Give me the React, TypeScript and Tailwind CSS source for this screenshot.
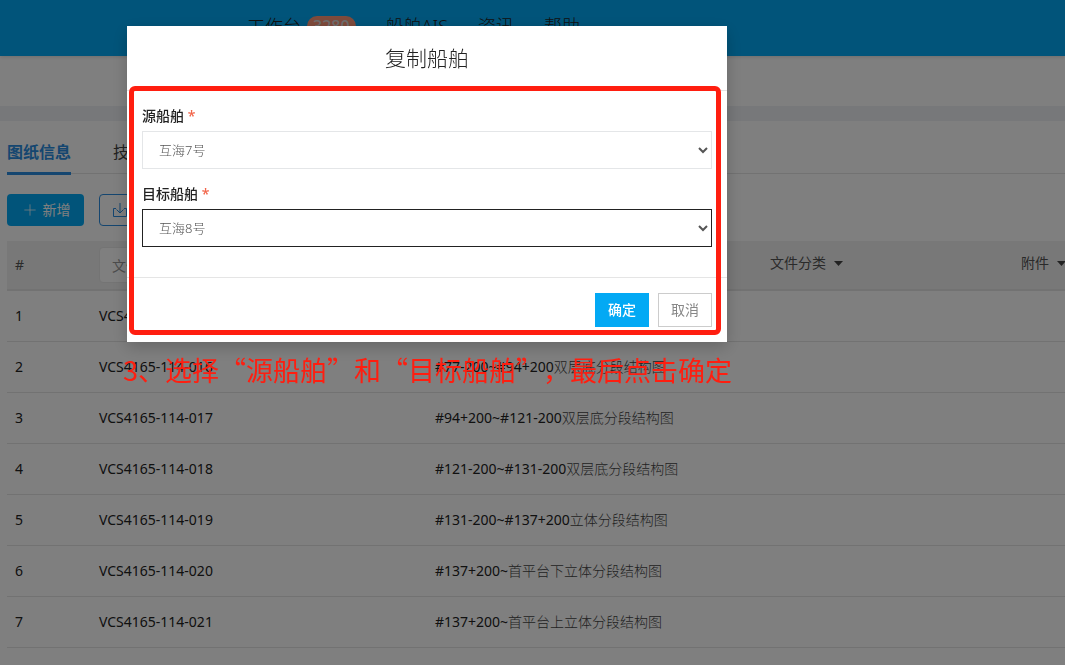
import React, { useState } from 'react';
import { ChevronDown, Plus } from 'lucide-react';

interface Drawing {
  id: number;
  code: string;
  range: string;
  name: string;
}

const DRAWINGS: Drawing[] = [
  { id: 1, code: 'VCS4165-114-015', range: '#60~#77-200', name: '双层底分段结构图' },
  { id: 2, code: 'VCS4165-114-016', range: '#77-200~#94+200', name: '双层底分段结构图' },
  { id: 3, code: 'VCS4165-114-017', range: '#94+200~#121-200', name: '双层底分段结构图' },
  { id: 4, code: 'VCS4165-114-018', range: '#121-200~#131-200', name: '双层底分段结构图' },
  { id: 5, code: 'VCS4165-114-019', range: '#131-200~#137+200', name: '立体分段结构图' },
  { id: 6, code: 'VCS4165-114-020', range: '#137+200~', name: '首平台下立体分段结构图' },
  { id: 7, code: 'VCS4165-114-021', range: '#137+200~', name: '首平台上立体分段结构图' },
];

const SHIPS = ['互海7号', '互海8号'];

const Caret = () => (
  <svg className="inline-block ml-2 mb-0.5" width="9" height="5" viewBox="0 0 9 5" fill="#444" aria-hidden="true">
    <path d="M0 0h9L4.5 5z" />
  </svg>
);

const DownloadIcon = () => (
  <svg width="16" height="16" viewBox="0 0 16 16" fill="none" stroke="currentColor" aria-hidden="true">
    <path d="M4 6.500H1.500v8h13v-8H12M8 1v10M4.500 7.500L8 11l3.500-3.500" />
  </svg>
);

interface ShipSelectProps {
  id: string;
  label: string;
  value: string;
  onChange: (value: string) => void;
  active?: boolean;
}

const ShipSelect: React.FC<ShipSelectProps> = ({ id, label, value, onChange, active }) => (
  <div className="mb-[15px]">
    <label htmlFor={id} className="block mb-[5px] text-sm leading-5 font-medium text-[#222]">
      {label} <span className="text-[#f2654a]">*</span>
    </label>
    <select
      id={id}
      value={value}
      onChange={(e) => onChange(e.target.value)}
      className={`block w-full h-[38px] pl-3 border bg-white text-[13px] font-light text-[#555] outline-none ${
        active ? 'border-[#222]' : 'border-[#e4e6e8]'
      }`}
    >
      {SHIPS.map((ship) => (
        <option key={ship}>{ship}</option>
      ))}
    </select>
  </div>
);

const CopyShipDialog = () => {
  const [source, setSource] = useState('互海7号');
  const [target, setTarget] = useState('互海8号');

  return (
    <div className="relative w-[600px] bg-white shadow-[0_5px_15px_rgba(0,0,0,0.2)]" role="dialog" aria-labelledby="copy-title">
      <div className="flex items-center justify-center h-[65px] border-b border-[#e5e5e5]">
        <h2 id="copy-title" className="text-[21px] font-light text-[#222]">复制船舶</h2>
      </div>
      <div className="p-[15px]">
        <ShipSelect id="source" label="源船舶" value={source} onChange={setSource} />
        <ShipSelect id="target" label="目标船舶" value={target} onChange={setTarget} active />
      </div>
      <div className="flex justify-end gap-[9px] p-[15px] border-t border-[#e5e5e5] text-sm">
        <button className="w-[54px] h-[34px] bg-[#03a9f4] font-medium text-white">确定</button>
        <button className="w-[54px] h-[34px] border border-[#ccc] bg-white text-[#888]">取消</button>
      </div>
      {/* highlight frame around the form */}
      <div className="absolute top-[60px] left-[2px] right-[6px] bottom-[7px] border-5 border-[#ff1e10] rounded-md pointer-events-none" />
      <p className="absolute top-full left-0 -ml-1 mt-2 text-[27px] leading-10 whitespace-nowrap text-[#ff1e10] font-['Noto_Sans_CJK_SC',sans-serif] [text-spacing-trim:space-all]">
        3、选择“源船舶”和“目标船舶”，最后点击确定
      </p>
    </div>
  );
};

const App = () => {
  return (
    <div className="h-screen overflow-hidden bg-white text-sm text-[#222] font-['Noto_Sans','Noto_Sans_CJK_SC',sans-serif]">
      <header className="relative h-14 pl-[247px] bg-[#03a9f4] shadow-[0_1px_4px_rgba(0,0,0,0.15)]">
        <nav className="flex items-center h-[52px] text-lg font-light">
          <a href="#" className="flex items-center">
            工作台
            <span className="ml-[6px] px-[6px] rounded-full bg-[#ff9678] text-base leading-5 font-medium text-[#ddd]">3280</span>
          </a>
          <a href="#" className="ml-[30px]">船舶AIS</a>
          <a href="#" className="ml-[30px]">资讯</a>
          <a href="#" className="ml-[30px]">帮助</a>
        </nav>
      </header>
      <div className="h-[50px]" />
      <div className="h-[15px] bg-[#eef1f5]" />

      <main className="pl-[7px]">
        <div className="flex h-[53px] gap-[42px] border-b border-[#e4e4e4] text-base">
          <a href="#" className="h-[54px] pt-[19px] border-b-3 border-[#2a8de0] font-bold text-[#2a8de0]">图纸信息</a>
          <a href="#" className="pt-[19px] text-[#444]">技术资料</a>
        </div>

        <div className="flex gap-[15px] mt-5 mb-[15px]">
          <button className="flex items-center justify-center gap-1 w-[77px] h-8 rounded bg-[#03a9f4] text-white">
            <Plus size={18} strokeWidth={1} /> 新增
          </button>
          <button className="flex items-center gap-1 h-8 px-3 rounded border border-[#2a8de0] text-[#2a8de0]">
            <DownloadIcon /> 导入
          </button>
        </div>

        <div className="overflow-hidden">
          <table className="w-full min-w-[1120px] table-fixed text-left">
            <thead>
              <tr className="h-[49px] bg-[#f0f0f0] border-b-2 border-[#e4e4e4] text-[#555]">
                <th className="w-[84px] px-2 font-normal">#</th>
                <th className="w-[336px] px-2 font-normal">
                  <input
                    aria-label="文件编号"
                    placeholder="文件编号"
                    className="block w-60 h-9 px-3 rounded border border-[#e8e8e8] bg-white placeholder:text-[#999]"
                  />
                </th>
                <th className="w-[335px] px-2 pb-1 font-normal">文件名称</th>
                <th className="w-[251px] px-2 pb-1 font-normal">文件分类<Caret /></th>
                <th className="px-2 pb-1 font-normal">附件<Caret /></th>
              </tr>
            </thead>
            <tbody>
              {DRAWINGS.map((drawing) => (
                <tr key={drawing.id} className="h-[51px] border-b border-[#e4e4e4]">
                  <td className="px-2">{drawing.id}</td>
                  <td className="px-2">{drawing.code}</td>
                  <td className="px-2">
                    {drawing.range}<span className="font-light text-[#444]">{drawing.name}</span>
                  </td>
                  <td />
                  <td />
                </tr>
              ))}
            </tbody>
          </table>
        </div>
      </main>

      <div className="fixed inset-0 pt-[26px] pl-[127px] bg-black/50">
        <CopyShipDialog />
      </div>
    </div>
  );
};

export default App;
